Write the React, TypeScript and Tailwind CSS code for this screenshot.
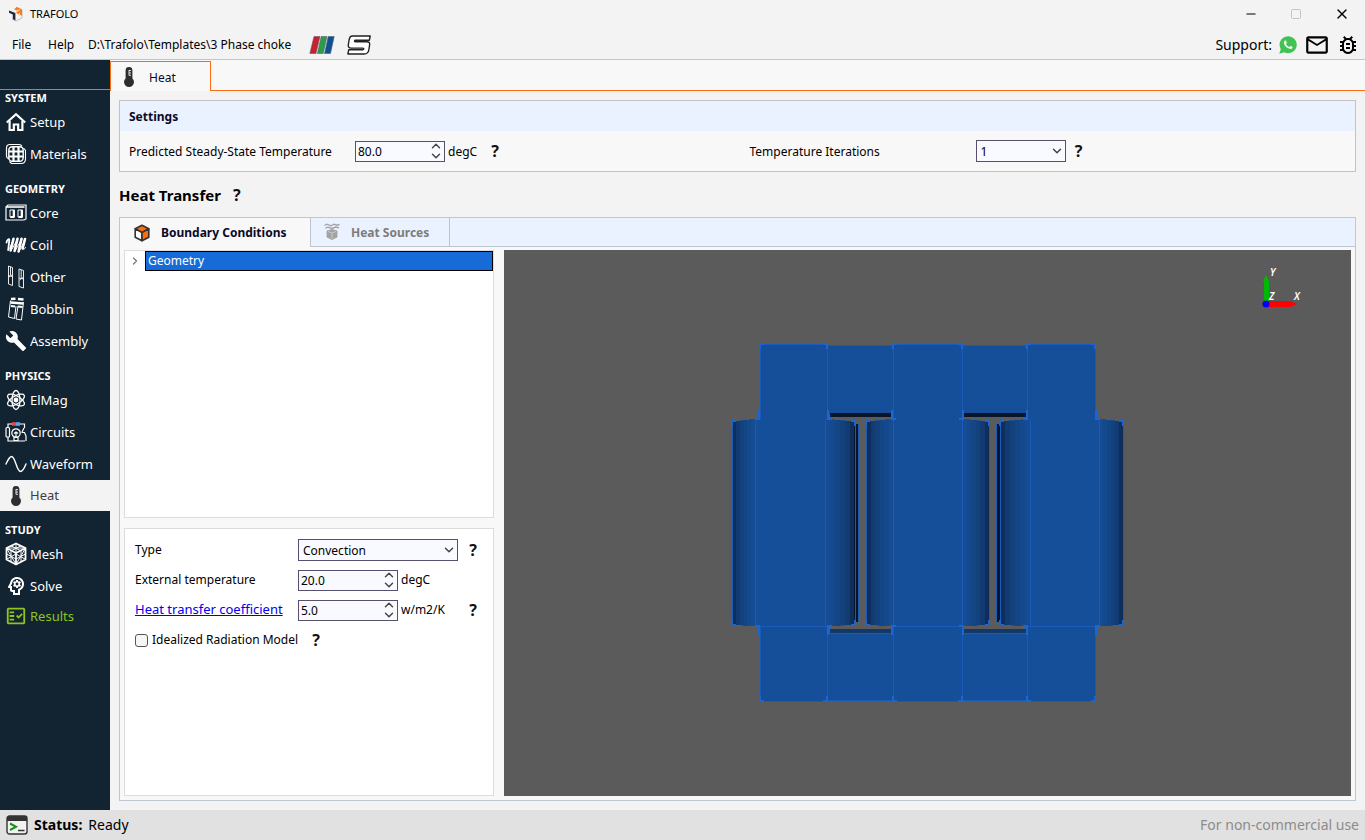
import React, { useState } from "react";
import { ChevronDown, ChevronRight, ChevronUp, Minus, Square, X } from "lucide-react";
import {
  MdBuild,
  MdMailOutline,
  MdOutlineBugReport,
  MdOutlineFactCheck,
  MdOutlinePsychology,
} from "react-icons/md";
import { IoLogoWhatsapp } from "react-icons/io";

/* ---------- icons ---------- */

const LogoIcon = () => (
  <svg viewBox="0 0 16 16" className="w-4 h-4">
    <path d="M8 1.2 14 4v8L8 15l-4-2" fill="none" stroke="#b9bec4" strokeWidth="1" />
    <path d="M1 4.600 7.400 7v7.400L4.800 13V8.400L1 6.800Z" fill="#1d2b38" />
    <path d="M6 3.200 9 1l5 2.400v6.400l-2-1-.2-2L10 8.600 8 6l2.200-.8Z" fill="#fb7a1e" />
    <path d="m9 4.400 3-.4M10 8l2 2" stroke="#ffd2ae" strokeWidth="1" />
  </svg>
);

const StripesIcon = () => (
  <svg viewBox="0 0 26 18" className="w-[26px] h-[18px]" stroke="#5b5f66" strokeWidth=".6">
    <path d="M5 .5h6L7 17.500H.8Z" fill="#c8202f" />
    <path d="M12.200.5h5.800L14.200 17.500H8.400Z" fill="#2a9d49" />
    <path d="M19.200.5h6L21.500 17.500h-6Z" fill="#0f4f98" />
  </svg>
);

const SIcon = () => (
  <svg viewBox="0 0 24 20" className="w-6 h-5" fill="#fff" stroke="#222" strokeWidth="1.400" strokeLinejoin="round">
    <path d="M5.500 1h17.700l-.8 4.200H8.500c-1.200 0-1.400 1.600-.2 1.600h11.500c2.200 0 3.200 1 2.800 3.200l-.7 4.500c-.4 2.800-2 4.500-4.800 4.500H.9l.8-4.200h14c1.200 0 1.500-1.700.2-1.700H4.200C2 13.100 1 12 1.300 9.900L2 5.500C2.300 2.700 3.400 1 5.500 1Z" />
  </svg>
);

const ThermometerIcon = () => (
  <svg viewBox="0 0 14 22" className="w-[14px] h-[22px]">
    <path d="M7 1a3.400 3.400 0 0 0-3.400 3.400v8a5 5 0 1 0 6.800 0v-8A3.400 3.400 0 0 0 7 1Z" fill="#2e2e2e" />
    <path d="M7 4v5.500M7 4.500h2M7 7h2M7 9.300h2" stroke="#f3f3f3" strokeWidth=".9" />
  </svg>
);

const HomeIcon = () => (
  <svg viewBox="0 0 22 20" className="w-[22px] h-5" fill="none" stroke="#fff" strokeWidth="2.200">
    <path d="M1.800 10.500 11 2.200l9.200 8.300" />
    <path d="M4.600 9v9h4.200v-5.500h4.400V18h4.200V9" />
  </svg>
);

const MaterialsIcon = () => (
  <svg viewBox="0 0 22 22" className="w-[22px] h-[22px]" fill="none" stroke="#fff">
    <path d="M4 16C2.500 15.500 1.500 14.500 1.500 13V5c0-2 1.500-3.500 3.500-3.500h9c1.500 0 2.500.8 3 2" strokeWidth="1.200" />
    <path d="M4.500 18.500 6.500 20.500H16c3 0 4.500-2 4.500-4.500V7.500l-2-2.500" strokeWidth="1.100" />
    <rect x="3.800" y="3.800" width="14.400" height="14.400" rx="3.500" strokeWidth="1.400" />
    <path d="M4 8.500h14M4 13.500h14M8.500 4v14M13.500 4v14" strokeWidth="2.200" />
  </svg>
);

const CoreIcon = () => (
  <svg viewBox="0 0 22 18" className="w-[22px] h-[18px]" fill="none" stroke="#fff">
    <path d="M1 3 3 1h18v14l-2 1H1Z" strokeWidth="1.200" />
    <path d="M1 3h18.500" strokeWidth="1.600" />
    <path d="M5 6h4.500v7H5ZM13 6h4.500v7H13Z" strokeWidth="1" />
    <path d="M8.600 6v7H5.500M16.600 6v7h-3" strokeWidth="1.800" />
  </svg>
);

const CoilIcon = () => (
  <svg viewBox="0 0 22 18" className="w-[22px] h-[18px]" fill="none" stroke="#fff" strokeLinejoin="round" strokeLinecap="round">
    <path d="M1.500 6.500C2 3.500 4.500 2 4.300 4L3.200 14" strokeWidth="1.800" />
    <path d="M8.500 2.800 5.600 14.500M12.500 2.800 9.600 15M16.500 2.800 13.600 15.500M20 3l-2.400 9.500" strokeWidth="2.600" />
    <path d="M3.200 14C4.500 14.500 8 4 8.500 2.800M5.600 14.500c1.500 0 6-10 6.900-11.700M9.600 15c1.500 0 6-10.500 6.900-12.200M13.600 15.500c1.500 0 5.600-10.500 6.400-12.500M17.600 12.500c.6 1.500 2 1 2.900-1" strokeWidth="1" />
  </svg>
);

const OtherIcon = () => (
  <svg viewBox="0 0 20 24" className="w-5 h-6" fill="none" stroke="#fff" strokeWidth=".9">
    <path d="M2.500 1 6.500 2.500v18L2.500 19ZM2.500 10.500l4 1M3 12l3-2M4.500 2v8" />
    <path d="m13 4 4.500 1.500V23L13 21.500ZM13 13l4.500 1M13.500 15l3.500-2.500M15.200 5v8" />
  </svg>
);

const BobbinIcon = () => (
  <svg viewBox="0 0 20 24" className="w-5 h-6" fill="none" stroke="#fff" strokeWidth="1">
    <path d="m5 2 4.500-.3M12 2l5.500.5M4.500 5.500 17 6.500" strokeWidth="2.600" />
    <path d="M4.500 3.500 2.500 20l6 1.500L10 9M12 9l-2 13 5.500 1 2-18" />
    <path d="m5 9 4 .5M12 9.500l4.500.5" strokeWidth="2" />
  </svg>
);

const AtomIcon = () => (
  <svg viewBox="0 0 22 22" className="w-[22px] h-[22px]" fill="none" stroke="#fff" strokeWidth="1.300">
    <ellipse cx="11" cy="11" rx="4" ry="9.500" />
    <ellipse cx="11" cy="11" rx="4" ry="9.500" transform="rotate(60 11 11)" />
    <ellipse cx="11" cy="11" rx="4" ry="9.500" transform="rotate(120 11 11)" />
    <circle cx="11" cy="11" r="1.800" fill="#fff" />
  </svg>
);

const CircuitsIcon = () => (
  <svg viewBox="0 0 22 22" className="w-[22px] h-[22px]" fill="none" stroke="#fff" strokeWidth="1.200">
    <path d="M3 6V3h4M15 3h4.500v4M3 16v4h17" />
    <rect x="1" y="6.500" width="3.500" height="9.500" rx="1" />
    <circle cx="11" cy="12" r="4.200" />
    <path d="M9 12.500 11 11l2 1.500M11 12v4M9 16.500h4v3H9ZM19 7l-2 4M16.500 11.500h3l1.500 3.500v5" />
    <path d="M7 3h4" stroke="#e5484d" strokeWidth="3.600" />
    <path d="M11 3h4" stroke="#5aa2ef" strokeWidth="3.600" />
  </svg>
);

const WaveIcon = () => (
  <svg viewBox="0 0 22 18" className="w-[22px] h-[18px]" fill="none" stroke="#fff" strokeWidth="1.400" strokeLinecap="round">
    <path d="M1 9C3.500 4 4.500 1.500 6.500 1.500c4 0 5 15 9 15 2 0 3.500-2.500 5.500-7.500" />
  </svg>
);

const MeshIcon = () => (
  <svg viewBox="0 0 22 24" className="w-[22px] h-6" fill="none" stroke="#fff" strokeLinejoin="round">
    <path d="m11 1.500 9.500 4.500v11.500L11 22.500 1.500 17.500V6ZM1.500 6l9.500 5 9.500-5M11 11v11.500" strokeWidth="1.800" />
    <path d="m6 3.800 9.500 4.800M16 3.800 6.500 8.600M11 2v8M4 6h14M1.500 12l9.500 5 9.500-5M6 8.500v11.500M16 8.500v11.500M2 7l8.500 14.500M2 17l9-5M20 7l-8.500 14.500M20 17l-9-5" strokeWidth="1" />
  </svg>
);

const CubeIcon = () => (
  <svg viewBox="0 0 16 18" className="w-4 h-[18px]" stroke="#333" strokeWidth="1.600" strokeLinejoin="round">
    <path d="m8 1.200 6.800 3.600L8 8.600 1.200 4.800Z" fill="#fb6d10" />
    <path d="M1.200 4.800 8 8.600v8.200l-6.800-3.600Z" fill="#fff" />
    <path d="M14.800 4.800 8 8.600v8.200l6.800-3.600Z" fill="#fb6d10" />
  </svg>
);

const HeatSourceIcon = () => (
  <svg viewBox="0 0 18 18" className="w-[18px] h-[18px]" fill="none" stroke="#a3a3a3">
    <path d="M1.500 2.500 4 1.200l4 1.600 3-1.600 3 1 2.500-.7M2.500 5.200 5 4.200l4 1.300L12.500 4l3.500.7" strokeWidth="1.400" />
    <path d="m9 6.500 5 1.500v6l-5 2.500L4 14V8Z" fill="#a3a3a3" />
    <path d="m5 8.500 4 1.500 4-1.500M9 10v6" stroke="#c9c9c9" />
  </svg>
);

const TerminalIcon = () => (
  <svg viewBox="0 0 22 20" className="w-[22px] h-5">
    <rect x="1" y="1" width="20" height="18" rx="2.500" fill="#f2f2f2" stroke="#333" strokeWidth="1.400" />
    <path d="M1 3.500C1 2 2 1 3.500 1h15C20 1 21 2 21 3.500V6H1Z" fill="#333" />
    <path d="m4 8.500 6 3.300L4 15" fill="none" stroke="#17931c" strokeWidth="2" />
    <path d="M12 15.500h6.500" stroke="#333" strokeWidth="1.500" />
  </svg>
);

/* ---------- form controls ---------- */

const HelpButton = ({ topic }: { topic: string }) => (
  <button type="button" aria-label={`Help: ${topic}`} className="w-3 text-base leading-5 font-bold text-[#111]">
    ?
  </button>
);

interface SpinBoxProps {
  id: string;
  initial: number;
  width: string;
}

const SpinBox: React.FC<SpinBoxProps> = ({ id, initial, width }) => {
  const [value, setValue] = useState(initial.toFixed(1));
  const step = (delta: number) => setValue((Number(value) + delta).toFixed(1));

  return (
    <div className={`flex h-[21px] border border-[#55506e] bg-[#f8faff] ${width}`}>
      <input
        id={id}
        inputMode="decimal"
        value={value}
        onChange={(e) => setValue(e.target.value)}
        className="min-w-0 flex-1 pt-px pl-[2px] bg-transparent outline-none"
      />
      <div className="flex flex-col w-4 text-[#444]">
        <button type="button" aria-label="Increase" onClick={() => step(1)} className="flex items-center justify-center h-[9px] overflow-hidden">
          <ChevronUp className="w-[14px] h-[14px] shrink-0" strokeWidth={2.5} />
        </button>
        <button type="button" aria-label="Decrease" onClick={() => step(-1)} className="flex items-center justify-center h-[10px] overflow-hidden">
          <ChevronDown className="w-[14px] h-[14px] shrink-0" strokeWidth={2.5} />
        </button>
      </div>
    </div>
  );
};

interface SelectBoxProps {
  id: string;
  options: string[];
  width: string;
}

const SelectBox: React.FC<SelectBoxProps> = ({ id, options, width }) => (
  <div className={`relative ${width}`}>
    <select id={id} className="block w-full h-[22px] pt-px pl-1 appearance-none border border-[#55506e] bg-[#f8faff] outline-none">
      {options.map((option) => (
        <option key={option}>{option}</option>
      ))}
    </select>
    <ChevronDown className="absolute right-[2px] top-1 w-[14px] h-[14px] text-[#444] pointer-events-none" strokeWidth={2.5} />
  </div>
);

/* ---------- sidebar ---------- */

const groups = [
  {
    title: "SYSTEM",
    items: [
      { label: "Setup", icon: <HomeIcon /> },
      { label: "Materials", icon: <MaterialsIcon /> },
    ],
  },
  {
    title: "GEOMETRY",
    items: [
      { label: "Core", icon: <CoreIcon /> },
      { label: "Coil", icon: <CoilIcon /> },
      { label: "Other", icon: <OtherIcon /> },
      { label: "Bobbin", icon: <BobbinIcon /> },
      { label: "Assembly", icon: <MdBuild className="w-[22px] h-[22px]" /> },
    ],
  },
  {
    title: "PHYSICS",
    items: [
      { label: "ElMag", icon: <AtomIcon /> },
      { label: "Circuits", icon: <CircuitsIcon /> },
      { label: "Waveform", icon: <WaveIcon /> },
      { label: "Heat", icon: <ThermometerIcon /> },
    ],
  },
  {
    title: "STUDY",
    items: [
      { label: "Mesh", icon: <MeshIcon /> },
      { label: "Solve", icon: <MdOutlinePsychology className="w-6 h-6 shrink-0" /> },
      { label: "Results", icon: <MdOutlineFactCheck className="w-[22px] h-[22px]" /> },
    ],
  },
];

const itemTone = (label: string) => {
  if (label === "Heat") return "h-[31px] bg-[#f3f3f3] text-[#4a3a3a]";
  if (label === "Results") return "h-7 text-[#8fc31f]";
  return "h-8 text-white";
};

const Sidebar = () => (
  <nav className="w-[110px] shrink-0 bg-[#122331]">
    <div className="h-[30px] border-b border-[#fb6d10]" />
    <div className="flex flex-col gap-[11px]">
      {groups.map((group) => (
        <section key={group.title}>
          <h2 className="pl-[5px] text-[11px] leading-4 font-bold text-white">{group.title}</h2>
          {group.items.map((item) => (
            <button
              key={item.label}
              type="button"
              className={`flex items-center w-full pl-[5px] gap-[3px] text-[13px] ${itemTone(item.label)}`}
            >
              <span className="flex justify-center w-[22px] shrink-0">{item.icon}</span>
              <span className="pt-px">{item.label}</span>
            </button>
          ))}
        </section>
      ))}
    </div>
  </nav>
);

/* ---------- 3D view ---------- */

// blocks of the core, as [x, width, inset from the top and bottom edges]
const blocks = [
  [-168, 67, 0],
  [-101, 66, 1],
  [-35, 69, 0],
  [34, 65, 1],
  [99, 68, 0],
];

// coils: outer left, left seam, right seam, outer right
const coils = [
  [-196, -173, -103, -73],
  [-62, -35, 34, 61],
  [72, 102, 171, 195],
];

const shades = ["#0e2f5b", "#113b72", "#13417c", "#144585", "#15498d", "#164c94"];

// [x, y, horizontal direction, vertical direction]
const ticks = [
  [-168, -179, 1, 1], [-101, -179, -1, 1], [-35, -179, 1, 1], [34, -179, -1, 1], [99, -179, 1, 1], [167, -179, -1, 1],
  [-168, 178, 1, -1], [-101, 178, -1, -1], [-35, 178, 1, -1], [34, 178, -1, -1], [99, 178, 1, -1], [167, 178, -1, -1],
  [-196, -102, 1, 1], [-73, -102, -1, 1], [-62, -102, 1, 1], [61, -102, -1, 1], [72, -102, 1, 1], [195, -102, -1, 1],
  [-196, 102, 1, -1], [-73, 102, -1, -1], [-62, 102, 1, -1], [61, 102, -1, -1], [72, 102, 1, -1], [195, 102, -1, -1],
  [-169, -104, -1, -1], [-100, -104, 1, -1], [-36, -104, 1, -1], [35, -104, -1, -1], [99, -104, -1, -1], [168, -104, 1, -1],
  [-169, 103, -1, 1], [-100, 103, 1, 1], [-36, 103, 1, 1], [35, 103, -1, 1], [99, 103, -1, 1], [168, 103, 1, 1],
];

const CoilShape = ({ edges }: { edges: number[] }) => {
  const [x0, x1, x2, x3] = edges;
  const left = (x1 - x0) / shades.length;
  const right = (x3 - x2) / shades.length;
  return (
    <g>
      <path
        d={`M${x0} -101Q${x0 + 8} -103 ${x1} -104H${x2}Q${x3 - 8} -103 ${x3} -101V101Q${x3 - 8} 103 ${x2} 103H${x1}Q${x0 + 8} 103 ${x0} 101Z`}
        fill="#164f99"
      />
      {shades.map((shade, i) => (
        <g key={shade} fill={shade}>
          <rect x={x0 + i * left} y={i < 3 ? -102 : -103} width={left} height={i < 3 ? 204 : 206} />
          <rect x={x3 - (i + 1) * right} y={i < 3 ? -102 : -103} width={right} height={i < 3 ? 204 : 206} />
        </g>
      ))}
      <path d={`M${x0} -102V102M${x1} -104V103M${x2} -104V103M${x3} -102V102`} stroke="#1a5ab8" fill="none" />
    </g>
  );
};

const Viewer = () => (
  <svg
    viewBox="-424 -273 847 546"
    preserveAspectRatio="xMidYMid slice"
    shapeRendering="crispEdges"
    role="img"
    aria-label="Geometry view"
    className="w-full h-full"
  >
    {blocks.map(([x, width, inset]) => (
      <g key={x} fill="#164f99" stroke="#1a5ab8">
        <rect x={x} y={-179 + inset} width={width} height={inset ? 69 : 75} />
        <rect x={x} y={inset ? 110 : 103} width={width} height={inset ? 67 : 75} />
      </g>
    ))}
    <path d="M-98-110h62v4h-62ZM36-110h62v4H36Z" fill="#08162c" />
    <path d="M-98 106h62v4h-62ZM36 106h62v4H36Z" fill="#123768" />
    {coils.map((edges) => (
      <CoilShape key={edges[0]} edges={edges} />
    ))}
    <path d="M-74-99h4V99h-4ZM68-99h4V99h-4Z" fill="#08162c" />
    <path d="M-70-99V99M68-99V99M-73-101V101M72-101V101" stroke="#1a5ab8" />
    {ticks.map(([x, y, dx, dy]) => (
      <path key={`${x}/${y}`} d={`M${x + 4 * dx} ${y}H${x}V${y + 5 * dy}`} fill="none" stroke="#1b66d2" strokeWidth="2" />
    ))}
    <path d="M-169-104v-9M-100-104v-9M-36-104v-9M35-104v-9M99-104v-9M168-104v-9M-169 103v9M-100 103v9M-36 103v9M35 103v9M99 103v9M168 103v9" stroke="#1b66d2" strokeWidth="2" />

    {/* orientation axes */}
    <g shapeRendering="auto">
      <path d="M336-218v-24h-1l3-6 3 6v24Z" fill="#00b800" />
      <path d="M340-222h22l7 3-7 3h-22Z" fill="#f00" />
      <circle cx="338" cy="-219" r="3.500" fill="#00f" />
      <g fill="#fff" className="text-[10px] font-semibold italic">
        <text x="342" y="-247">Y</text>
        <text x="341" y="-223">Z</text>
        <text x="366" y="-223">X</text>
      </g>
    </g>
  </svg>
);

/* ---------- main area ---------- */

const SettingsPanel = () => (
  <section className="border border-[#c2c2c2] bg-[#f8f8f8]">
    <h2 className="flex items-center h-[30px] pt-px pl-[9px] font-bold text-[#0a0a28] bg-[#eaf2ff]">Settings</h2>
    <div className="grid grid-cols-2 gap-6 h-10 px-[9px]">
      <div className="flex items-center">
        <label htmlFor="steady" className="w-[226px] pt-px">Predicted Steady-State Temperature</label>
        <SpinBox id="steady" initial={80} width="w-[90px]" />
        <span className="w-11 pt-px pl-[3px]">degC</span>
        <HelpButton topic="Predicted temperature" />
      </div>
      <div className="flex items-center">
        <label htmlFor="iterations" className="w-[226px] pt-px">Temperature Iterations</label>
        <SelectBox id="iterations" options={["1", "2", "3"]} width="w-[90px]" />
        <span className="w-[7px]" />
        <HelpButton topic="Iterations" />
      </div>
    </div>
  </section>
);

const BoundaryForm = () => (
  <form className="pt-1.5 pl-[10px] border border-[#dcdcdc] bg-white">
    <div className="flex items-center h-[30px]">
      <label htmlFor="type" className="w-[163px]">Type</label>
      <SelectBox id="type" options={["Convection", "Temperature", "Heat flux"]} width="w-40" />
      <span className="w-[9px]" />
      <HelpButton topic="Type" />
    </div>
    <div className="flex items-center h-[30px]">
      <label htmlFor="external" className="w-[163px]">External temperature</label>
      <SpinBox id="external" initial={20} width="w-[100px]" />
      <span className="pl-[3px]">degC</span>
    </div>
    <div className="flex items-center h-[30px]">
      <div className="w-[163px]">
        <a href="#coefficient" className="text-[13px] text-[#0000f0] underline">Heat transfer coefficient</a>
      </div>
      <SpinBox id="coefficient" initial={5} width="w-[100px]" />
      <label htmlFor="coefficient" className="w-[69px] pl-[3px]">w/m2/K</label>
      <HelpButton topic="Heat transfer coefficient" />
    </div>
    <div className="flex items-center h-[30px]">
      <label className="flex items-center gap-1">
        <input type="checkbox" className="w-[13px] h-[13px] appearance-none border border-[#555] rounded-[3px] bg-[#f6f6f6] checked:bg-[#176bd8]" />
        Idealized Radiation Model
      </label>
      <span className="w-3" />
      <HelpButton topic="Idealized Radiation Model" />
    </div>
  </form>
);

const TransferPanel = () => (
  <section className="flex flex-col flex-1 border border-[#bcc8d4] bg-[#f8f8f8]">
    <div role="tablist" className="flex h-[29px] bg-[#eaf2ff] font-bold">
      <button type="button" role="tab" aria-selected="true" className="flex items-center w-[190px] pl-[14px] gap-[11px] bg-[#f8f8f8] text-[#0a0a28]">
        <CubeIcon />
        <span className="pt-px">Boundary Conditions</span>
      </button>
      <button type="button" role="tab" aria-selected="false" className="flex items-center w-[140px] pl-3 gap-[10px] border-x border-b border-[#bcc4cc] text-[#7c7c7c]">
        <HeatSourceIcon />
        <span className="pt-px">Heat Sources</span>
      </button>
      <div className="flex-1 border-b border-[#bcc4cc]" />
    </div>
    <div className="flex flex-1 gap-[10px] pt-[3px] px-1 pb-1">
      <div className="grid grid-rows-2 w-[370px] shrink-0 gap-[10px]">
        <div role="tree" className="border border-[#dcdcdc] bg-white">
          <div role="treeitem" aria-selected="true" className="flex items-center">
            <button type="button" aria-label="Expand" className="flex justify-center w-5 text-[#777]">
              <ChevronRight className="w-3 h-3" strokeWidth={2.5} />
            </button>
            <span className="flex-1 h-5 pl-[2px] leading-[18px] border border-black bg-[#176bd8] text-white">Geometry</span>
          </div>
        </div>
        <BoundaryForm />
      </div>
      <div className="flex-1 min-w-0 bg-[#5b5b5b]">
        <Viewer />
      </div>
    </div>
  </section>
);

const TitleBar = () => (
  <header className="border-b border-[#c4c4c4]">
    <div className="flex items-center h-7 pl-2 pr-[15px]">
      <LogoIcon />
      <span className="pl-[6px] text-[11px]">TRAFOLO</span>
      <div className="flex items-center gap-8 ml-auto">
        <button type="button" aria-label="Minimize"><Minus className="w-[14px] h-[14px]" strokeWidth={2} /></button>
        <button type="button" aria-label="Maximize"><Square className="w-3 h-3 text-[#c4c4c4]" strokeWidth={2} /></button>
        <button type="button" aria-label="Close"><X className="w-4 h-4" strokeWidth={2} /></button>
      </div>
    </div>
    <div className="flex items-center h-[31px] pt-0.5 pl-3 pr-[5px]">
      <button type="button" className="w-9 text-left">File</button>
      <button type="button" className="w-10 text-left">Help</button>
      <span>D:\Trafolo\Templates\3 Phase choke</span>
      <div className="flex items-center gap-3 pl-[18px]">
        <StripesIcon />
        <SIcon />
      </div>
      <div className="flex items-center gap-1.5 ml-auto">
        <span className="text-sm">Support:</span>
        <a href="#whatsapp" aria-label="WhatsApp"><IoLogoWhatsapp className="w-5 h-5 text-[#40c351]" /></a>
        <a href="#mail" aria-label="Mail"><MdMailOutline className="w-[26px] h-[26px]" /></a>
        <a href="#bug" aria-label="Report a bug"><MdOutlineBugReport className="w-6 h-6" /></a>
      </div>
    </div>
  </header>
);

const App: React.FC = () => (
  <div className="flex flex-col min-h-screen bg-[#f3f3f3] text-black text-xs font-['Noto_Sans',sans-serif]">
    <TitleBar />
    <div className="flex flex-1">
      <Sidebar />
      <main className="flex flex-col flex-1 min-w-0">
        <div className="flex h-[31px] bg-[#f8f8f8]">
          <div className="flex items-center w-[101px] mt-px pl-[11px] gap-[13px] border-t border-x border-[#fb6d10] text-[#0a0a28]">
            <ThermometerIcon />
            <span className="pt-0.5">Heat</span>
          </div>
          <div className="flex-1 border-b border-[#fb6d10]" />
        </div>
        <div className="flex flex-col flex-1 p-[9px]">
          <SettingsPanel />
          <div className="flex items-center gap-[10px] h-[45px] pt-px">
            <h1 className="text-[15px] font-bold">Heat Transfer</h1>
            <HelpButton topic="Heat Transfer" />
          </div>
          <TransferPanel />
        </div>
      </main>
    </div>
    <footer className="flex items-center h-[30px] px-[6px] gap-[6px] bg-[#e1e1e1] text-sm">
      <TerminalIcon />
      <strong>Status:</strong>
      <span>Ready</span>
      <span className="ml-auto text-[#8c8c8c]">For non-commercial use</span>
    </footer>
  </div>
);

export default App;
